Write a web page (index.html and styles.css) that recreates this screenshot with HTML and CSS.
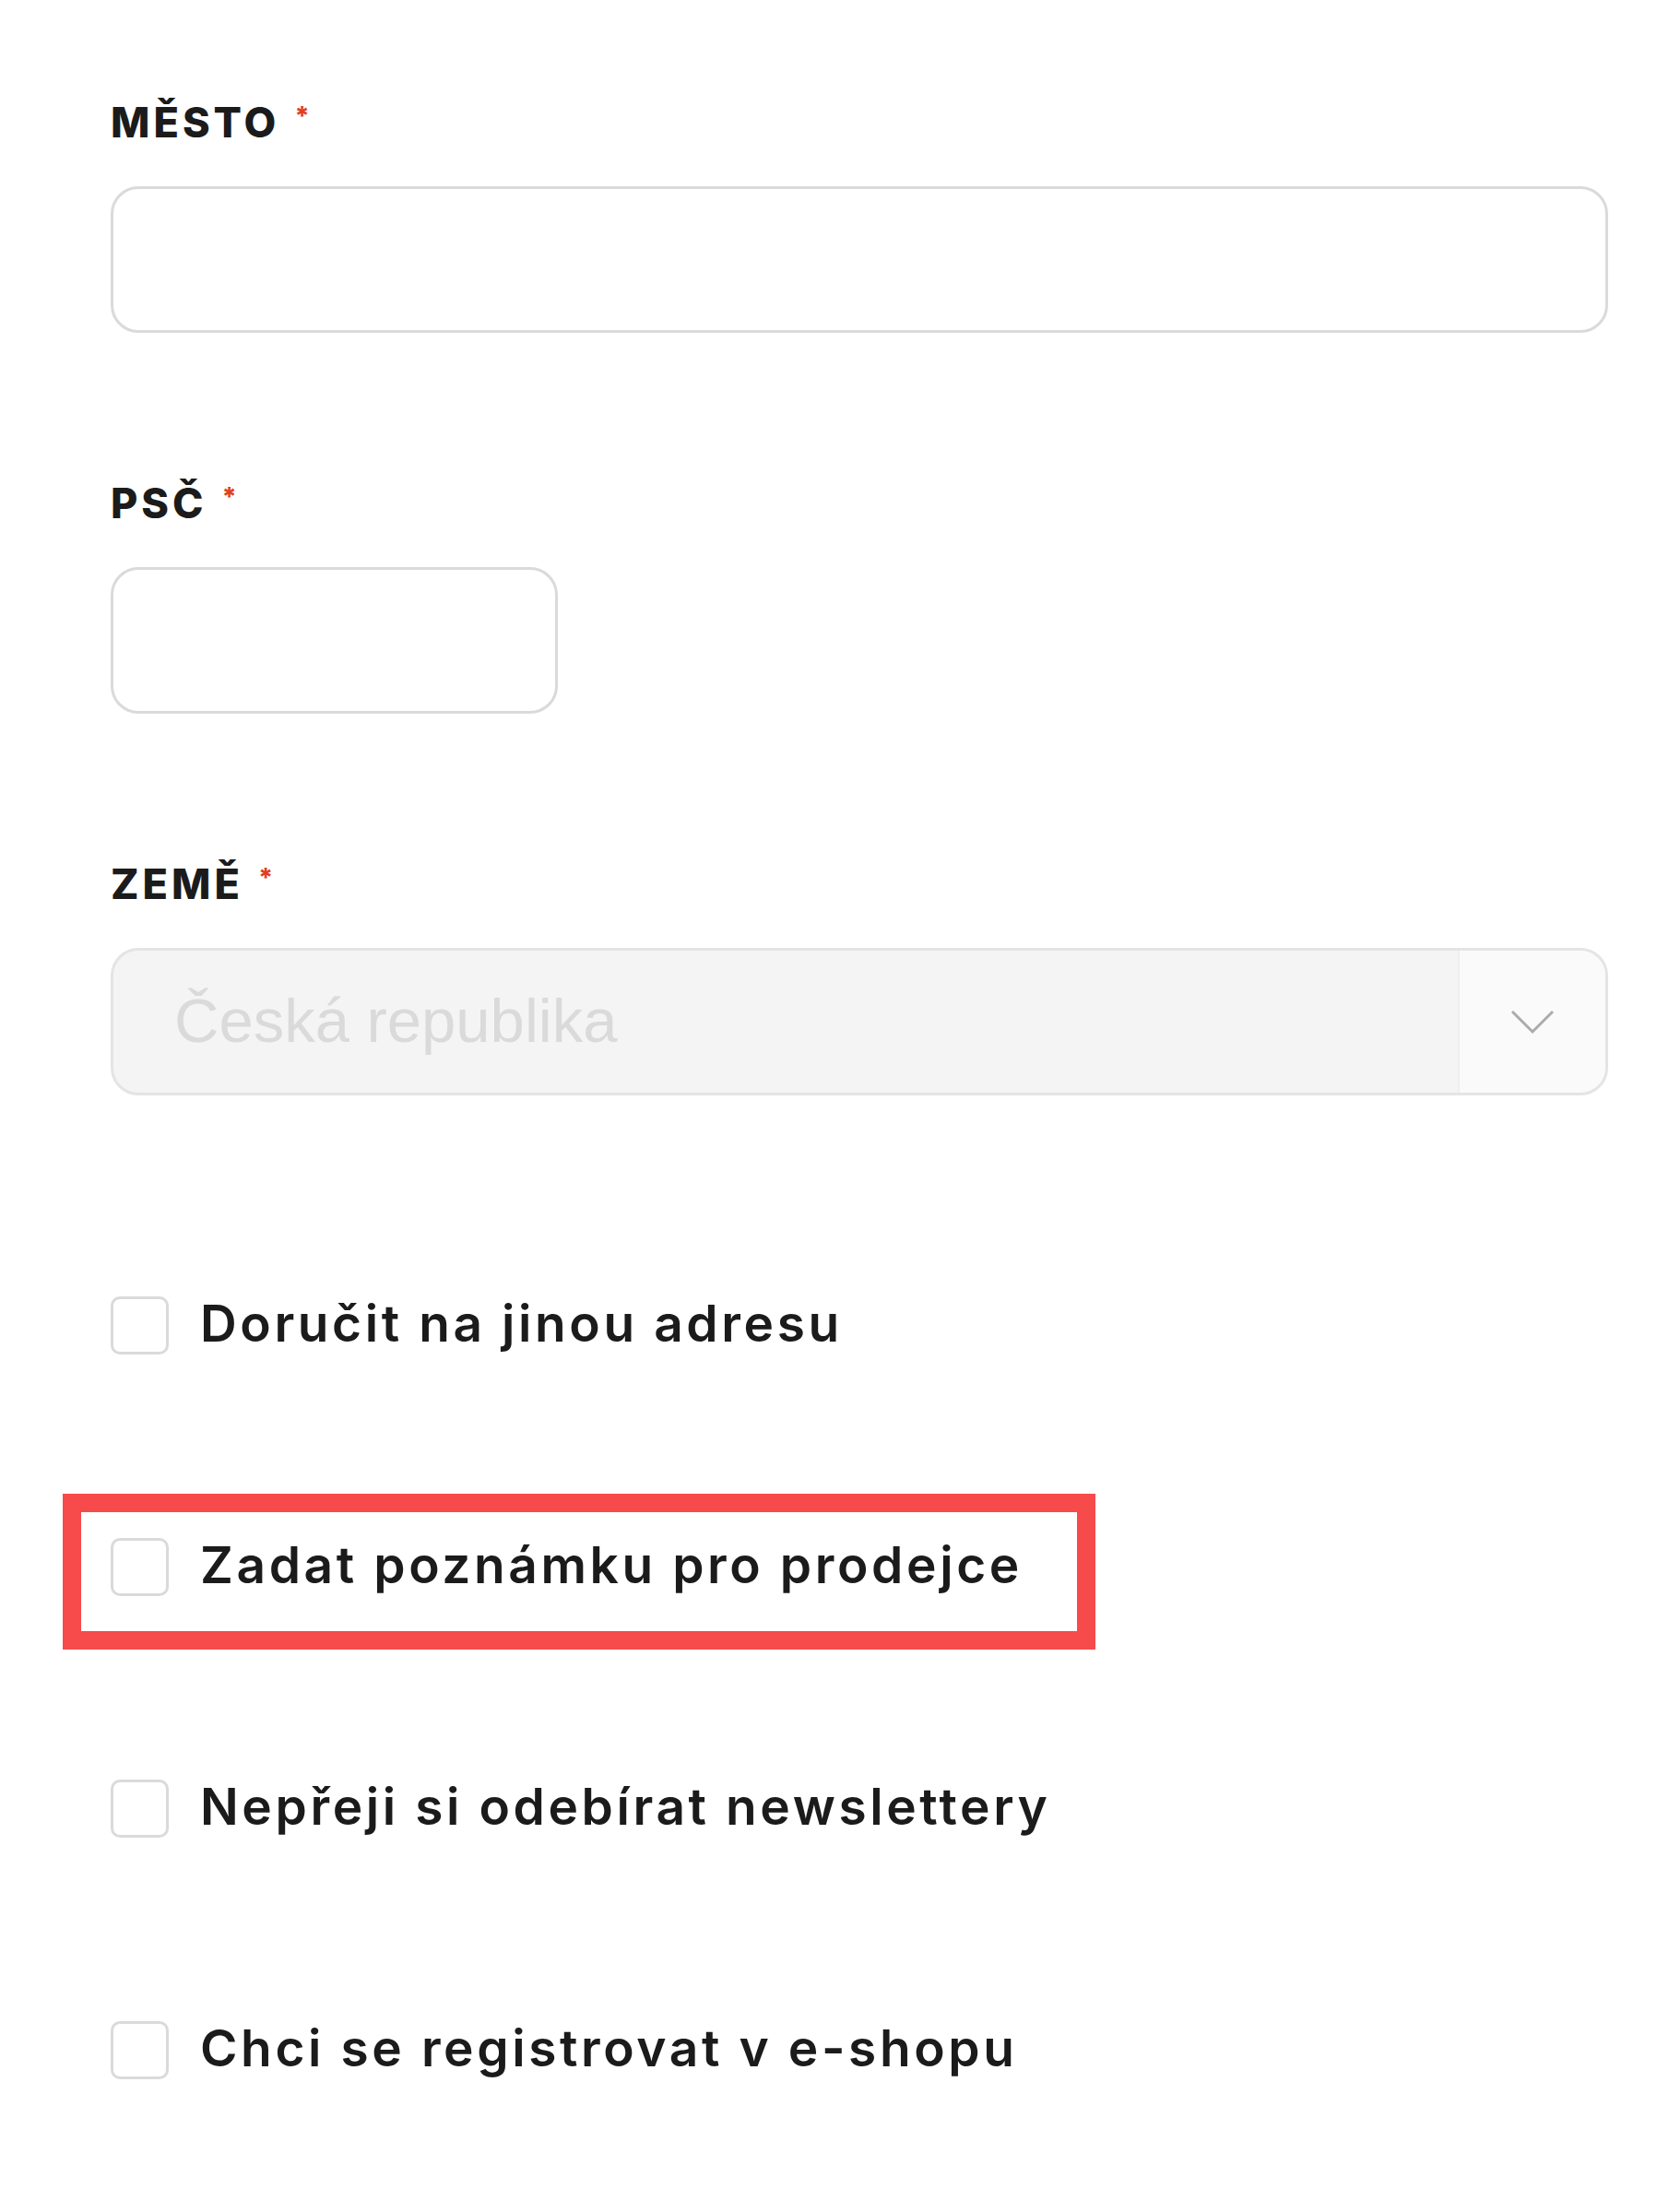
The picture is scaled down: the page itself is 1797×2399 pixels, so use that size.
FILE: index.html
```html
<!DOCTYPE html>
<html lang="cs">
<head>
  <meta charset="UTF-8">
  <meta name="viewport" content="width=device-width, initial-scale=1.0">
  <title>Adresa</title>
  <link rel="stylesheet" href="styles.css">
</head>
<body>

  <form class="address-form" onsubmit="return false">
    <div class="field">
      <label class="field-label" for="city">MĚSTO<span class="req">*</span></label>
      <input class="text-input" type="text" id="city">
    </div>

    <div class="field">
      <label class="field-label" for="zip">PSČ<span class="req">*</span></label>
      <input class="text-input text-input-short" type="text" id="zip">
    </div>

    <div class="field">
      <label class="field-label">ZEMĚ<span class="req">*</span></label>
      <div class="select is-disabled">
        <span class="select-value">Česká republika</span>
        <span class="select-arrow">
          <svg width="48" height="28" viewBox="0 0 48 28"><path d="M2 3 L24 25 L46 3" fill="none" stroke="#ababab" stroke-width="3"/></svg>
        </span>
      </div>
    </div>

    <div class="options">
      <label class="check-row"><input type="checkbox"><span>Doručit na jinou adresu</span></label>
      <label class="check-row is-highlighted"><input type="checkbox"><span>Zadat poznámku pro prodejce</span></label>
      <label class="check-row"><input type="checkbox"><span>Nepřeji si odebírat newslettery</span></label>
      <label class="check-row"><input type="checkbox"><span>Chci se registrovat v e-shopu</span></label>
    </div>
  </form>

</body>
</html>
```

FILE: styles.css
```css
body { margin: 0; background: #fff; font-family: Inter, "Noto Sans", sans-serif; color: #1b1b1b; }
.address-form { padding: 106px 53px 140px 120px; }
.field + .field { margin-top: 158px; }
.field-label { display: block; font-size: 45px; font-weight: 800; line-height: 54px; letter-spacing: 4px; margin-bottom: 42px; }
.req { color: #e2401f; font-size: 28px; line-height: 40px; vertical-align: top; margin-left: 16px; letter-spacing: 0; }

.text-input { display: block; box-sizing: border-box; width: 100%; height: 159px; margin: 0; padding: 0 40px; border: 3px solid #dadada; border-radius: 30px; background: #fff; font-size: 50px; outline: none; -webkit-appearance: none; appearance: none; }
.text-input-short { width: 485px; }

.select { display: flex; box-sizing: border-box; height: 160px; border: 3px solid #e4e4e4; border-radius: 30px; background: #f4f4f4; overflow: hidden; }
.select-value { flex: 1; display: flex; align-items: center; padding-left: 66px; padding-bottom: 4px; font-family: "Liberation Sans", Arial, sans-serif; font-size: 67px; color: #dadada; }
.select-arrow { width: 158px; display: flex; align-items: center; justify-content: center; background: #fafafa; border-left: 2px solid #eeeeee; }

.options { margin-top: 218px; display: flex; flex-direction: column; gap: 199px; }
.check-row { position: relative; display: flex; align-items: center; gap: 34px; height: 63px; font-size: 55px; font-weight: 600; letter-spacing: 3.6px; cursor: pointer; }
.check-row span { line-height: 58px; margin-bottom: 5px; }
.check-row input { flex: none; width: 63px; height: 63px; margin: 0; border: 3px solid #dadada; border-radius: 10px; background: #fff; -webkit-appearance: none; appearance: none; }
.check-row.is-highlighted::after { content: ""; position: absolute; left: -52px; top: -48px; bottom: -58px; width: 1120px; box-sizing: border-box; border: 20px solid #f74a4a; pointer-events: none; }
```
